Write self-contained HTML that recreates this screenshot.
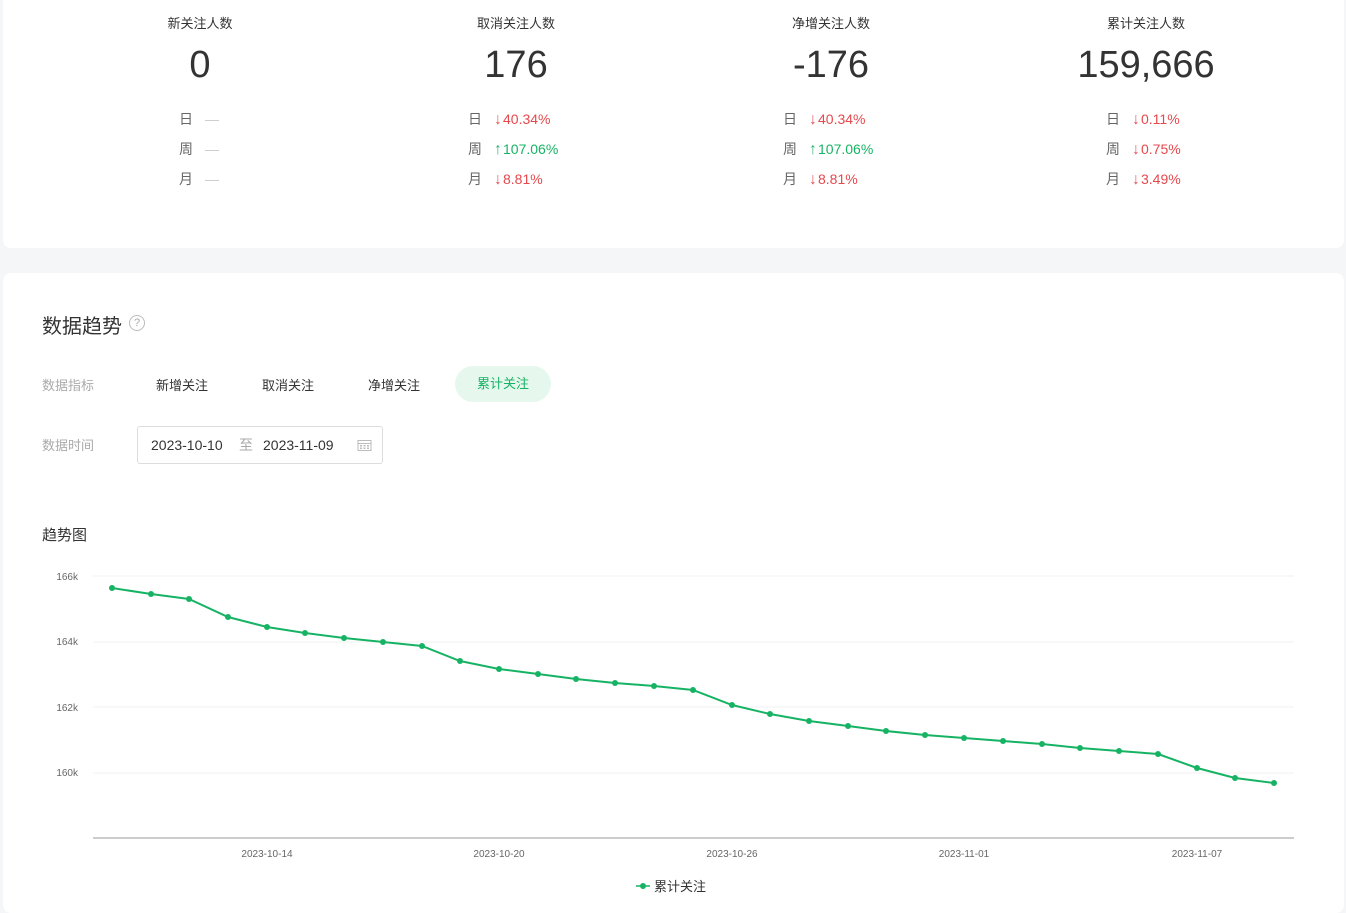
<!DOCTYPE html>
<html><head><meta charset="utf-8"><style>
body{margin:0;width:1346px;height:898px;background:#f5f6f7;font-family:"Liberation Sans","Noto Sans CJK SC",sans-serif;overflow:hidden;position:relative;color:#333}
.card{position:absolute;background:#fff;border-radius:8px}
.stat{position:absolute;top:0;width:300px;text-align:center}
.stat .t{position:absolute;top:13px;width:100%;font-size:13px;color:#333}
.stat .v{position:absolute;top:44px;width:100%;font-size:38px;color:#333}
.row{position:absolute;font-size:14px;white-space:nowrap}
.row .l{color:#666;display:inline-block;width:26px}
.red{color:#e5484d}.green{color:#16b364}.dash{color:#ccc}
.a{display:inline-block;font-size:16px;margin-right:1px;transform:scaleX(0.9)}
.abs{position:absolute;white-space:nowrap}
</style></head><body>
<div class="card" style="left:3px;top:-10px;width:1341px;height:258px"></div>
<div class="card" style="left:3px;top:273px;width:1341px;height:640px"></div>

<div class="stat" style="left:50px"><div class="t">新关注人数</div><div class="v">0</div></div>
<div class="stat" style="left:366px"><div class="t">取消关注人数</div><div class="v">176</div></div>
<div class="stat" style="left:681px"><div class="t">净增关注人数</div><div class="v">-176</div></div>
<div class="stat" style="left:996px"><div class="t">累计关注人数</div><div class="v">159,666</div></div>

<div class="row" style="left:179px;top:109px"><span class="l">日</span><span class="dash">—</span></div>
<div class="row" style="left:179px;top:139px"><span class="l">周</span><span class="dash">—</span></div>
<div class="row" style="left:179px;top:169px"><span class="l">月</span><span class="dash">—</span></div>

<div class="row" style="left:468px;top:109px"><span class="l">日</span><span class="red"><span class="a">↓</span>40.34%</span></div>
<div class="row" style="left:468px;top:139px"><span class="l">周</span><span class="green"><span class="a">↑</span>107.06%</span></div>
<div class="row" style="left:468px;top:169px"><span class="l">月</span><span class="red"><span class="a">↓</span>8.81%</span></div>

<div class="row" style="left:783px;top:109px"><span class="l">日</span><span class="red"><span class="a">↓</span>40.34%</span></div>
<div class="row" style="left:783px;top:139px"><span class="l">周</span><span class="green"><span class="a">↑</span>107.06%</span></div>
<div class="row" style="left:783px;top:169px"><span class="l">月</span><span class="red"><span class="a">↓</span>8.81%</span></div>

<div class="row" style="left:1106px;top:109px"><span class="l">日</span><span class="red"><span class="a">↓</span>0.11%</span></div>
<div class="row" style="left:1106px;top:139px"><span class="l">周</span><span class="red"><span class="a">↓</span>0.75%</span></div>
<div class="row" style="left:1106px;top:169px"><span class="l">月</span><span class="red"><span class="a">↓</span>3.49%</span></div>

<div class="abs" style="left:42px;top:310px;font-size:20px;color:#333">数据趋势</div>
<div class="abs" style="left:129px;top:315px;width:14px;height:14px;border:1px solid #bbb;border-radius:50%;font-size:11px;line-height:14px;text-align:center;color:#aaa">?</div>

<div class="abs" style="left:42px;top:375px;font-size:13px;color:#aaa">数据指标</div>
<div class="abs" style="left:156px;top:375px;font-size:13px">新增关注</div>
<div class="abs" style="left:262px;top:375px;font-size:13px">取消关注</div>
<div class="abs" style="left:368px;top:375px;font-size:13px">净增关注</div>
<div class="abs" style="left:455px;top:366px;width:96px;height:36px;border-radius:18px;background:#e6f8ee;color:#16b364;font-size:13px;line-height:36px;text-align:center">累计关注</div>

<div class="abs" style="left:42px;top:435px;font-size:13px;color:#aaa">数据时间</div>
<div class="abs" style="left:137px;top:426px;width:244px;height:36px;border:1px solid #ddd;border-radius:3px;font-size:14px;line-height:36px">
<span style="position:absolute;left:13px">2023-10-10</span><span style="position:absolute;left:101px;color:#aaa">至</span><span style="position:absolute;left:125px">2023-11-09</span>
<svg style="position:absolute;left:219px;top:12px" width="16" height="13" viewBox="0 0 16 13"><rect x="1" y="1.5" width="13" height="10" fill="none" stroke="#bbb"/><line x1="1" y1="4.5" x2="14" y2="4.5" stroke="#bbb"/><g fill="#bbb"><rect x="3" y="6" width="2" height="1.5"/><rect x="6.5" y="6" width="2" height="1.5"/><rect x="10" y="6" width="2" height="1.5"/><rect x="3" y="8.5" width="2" height="1.5"/><rect x="6.5" y="8.5" width="2" height="1.5"/><rect x="10" y="8.5" width="2" height="1.5"/></g></svg>
</div>

<div class="abs" style="left:42px;top:524px;font-size:15px">趋势图</div>

<svg class="abs" style="left:0;top:0" width="1346" height="898">
<g stroke="#f0f0f0"><line x1="93" y1="576" x2="1294" y2="576"/><line x1="93" y1="642" x2="1294" y2="642"/><line x1="93" y1="707" x2="1294" y2="707"/><line x1="93" y1="773" x2="1294" y2="773"/></g>
<line x1="93" y1="838" x2="1294" y2="838" stroke="#bbb" stroke-width="1.5"/>
<g font-size="10" fill="#666" text-anchor="end" font-family="Liberation Sans"><text x="78" y="580">166k</text><text x="78" y="645">164k</text><text x="78" y="711">162k</text><text x="78" y="776">160k</text></g>
<g font-size="10" fill="#666" text-anchor="middle" font-family="Liberation Sans"><text x="267" y="857">2023-10-14</text><text x="499" y="857">2023-10-20</text><text x="732" y="857">2023-10-26</text><text x="964" y="857">2023-11-01</text><text x="1197" y="857">2023-11-07</text></g>
<polyline fill="none" stroke="#16b364" stroke-width="2" points="112,588 151,594 189,599 228,617 267,627 305,633 344,638 383,642 422,646 460,661 499,669 538,674 576,679 615,683 654,686 693,690 732,705 770,714 809,721 848,726 886,731 925,735 964,738 1003,741 1042,744 1080,748 1119,751 1158,754 1197,768 1235,778 1274,783"/>
<g fill="#16b364"><circle cx="112" cy="588" r="3"/><circle cx="151" cy="594" r="3"/><circle cx="189" cy="599" r="3"/><circle cx="228" cy="617" r="3"/><circle cx="267" cy="627" r="3"/><circle cx="305" cy="633" r="3"/><circle cx="344" cy="638" r="3"/><circle cx="383" cy="642" r="3"/><circle cx="422" cy="646" r="3"/><circle cx="460" cy="661" r="3"/><circle cx="499" cy="669" r="3"/><circle cx="538" cy="674" r="3"/><circle cx="576" cy="679" r="3"/><circle cx="615" cy="683" r="3"/><circle cx="654" cy="686" r="3"/><circle cx="693" cy="690" r="3"/><circle cx="732" cy="705" r="3"/><circle cx="770" cy="714" r="3"/><circle cx="809" cy="721" r="3"/><circle cx="848" cy="726" r="3"/><circle cx="886" cy="731" r="3"/><circle cx="925" cy="735" r="3"/><circle cx="964" cy="738" r="3"/><circle cx="1003" cy="741" r="3"/><circle cx="1042" cy="744" r="3"/><circle cx="1080" cy="748" r="3"/><circle cx="1119" cy="751" r="3"/><circle cx="1158" cy="754" r="3"/><circle cx="1197" cy="768" r="3"/><circle cx="1235" cy="778" r="3"/><circle cx="1274" cy="783" r="3"/>
<circle cx="643" cy="886" r="3"/></g>
<line x1="636" y1="886" x2="650" y2="886" stroke="#16b364" stroke-width="1.5"/>
<text x="654" y="891" font-size="13" fill="#333" font-family="Liberation Sans,Noto Sans CJK SC,sans-serif">累计关注</text>
</svg>
</body></html>
